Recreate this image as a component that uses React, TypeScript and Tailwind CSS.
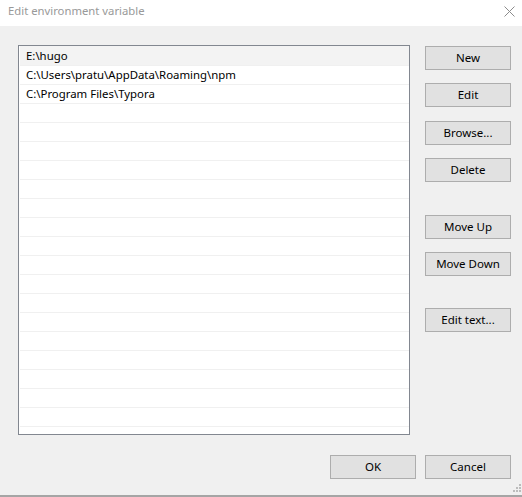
import React from 'react';

const font = { fontFamily: '"Noto Sans", "Open Sans", sans-serif' };

const paths = ['E:\\hugo', 'C:\\Users\\pratu\\AppData\\Roaming\\npm', 'C:\\Program Files\\Typora'];

const DialogButton: React.FC<{ label: string; className?: string }> = ({ label, className = '' }) => (
    <button
        className={`w-[86px] h-[24px] bg-[#e1e1e1] border border-[#adadad] text-[11.5px] text-black leading-none flex items-center justify-center ${className}`}
    >
        {label}
    </button>
);

const SizeGrip = () => (
    <svg width="10" height="10" viewBox="0 0 10 10" className="absolute right-[1px] bottom-[3px]">
        {[
            [8, 0], [8, 3], [5, 3], [8, 6], [5, 6], [2, 6],
        ].map(([x, y], i) => (
            <rect key={i} x={x} y={y} width="2" height="2" fill="#bcbcbc" />
        ))}
    </svg>
);

export default function App() {
    const rows = Array.from({ length: 21 }, (_, i) => paths[i] ?? '');

    return (
        <div className="w-[522px] h-[497px] bg-[#f0f0f0] flex flex-col relative overflow-hidden" style={font}>
            {/* title bar */}
            <div className="h-[26px] bg-white flex items-center justify-between shrink-0">
                <span className="pl-[8px] mb-[4px] text-[11.3px] text-[#999999]">Edit environment variable</span>
                <svg width="11" height="11" viewBox="0 0 11 11" className="mr-[7px] mb-[4px]">
                    <path d="M0.5 0.5 L10.5 10.5 M10.5 0.5 L0.5 10.5" stroke="#8c8c8c" strokeWidth="1" />
                </svg>
            </div>

            <div className="flex pl-[18px] pt-[19px]">
                {/* list box */}
                <div className="w-[392px] h-[390px] border border-[#828790] bg-white pl-[1px] overflow-hidden">
                    {rows.map((text, i) => (
                        <div
                            key={i}
                            className={`h-[19px] pl-[6px] flex items-center text-[11.4px] text-black whitespace-nowrap ${
                                i === 0 ? 'bg-[#f3f3f3]' : 'border-t border-[#f0f0f0]'
                            }`}
                        >
                            {text}
                        </div>
                    ))}
                </div>

                {/* side buttons */}
                <div className="ml-[15px] pt-[1px] flex flex-col">
                    <DialogButton label="New" />
                    <DialogButton label="Edit" className="mt-[13px]" />
                    <DialogButton label="Browse..." className="mt-[14px]" />
                    <DialogButton label="Delete" className="mt-[13px]" />
                    <DialogButton label="Move Up" className="mt-[33px]" />
                    <DialogButton label="Move Down" className="mt-[13px]" />
                    <DialogButton label="Edit text..." className="mt-[32px]" />
                </div>
            </div>

            {/* footer */}
            <div className="flex justify-end pr-[11px] mt-[20px] gap-[9px]">
                <DialogButton label="OK" />
                <DialogButton label="Cancel" />
            </div>

            <div className="flex-1" />
            <div className="h-[2px] bg-[#a5a5a5] shrink-0" />
            <SizeGrip />
        </div>
    );
}
